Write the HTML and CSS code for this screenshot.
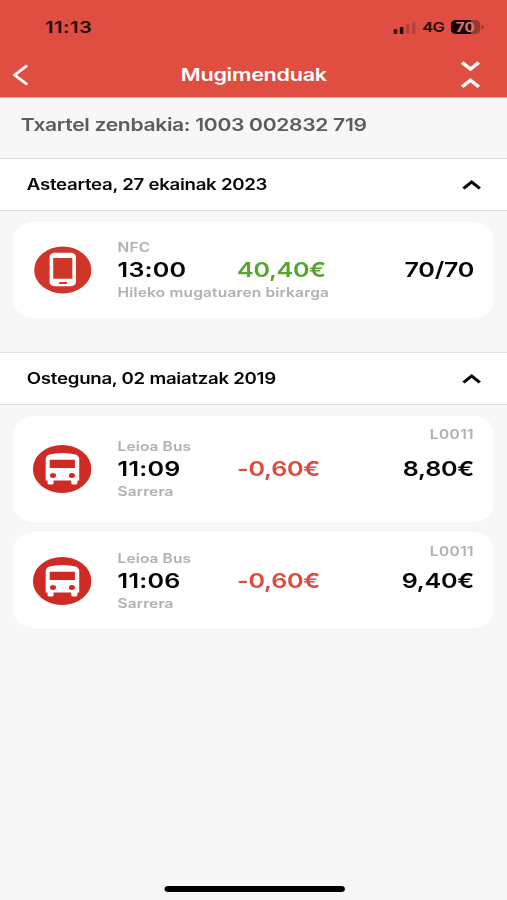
FILE: index.html
```html
<!DOCTYPE html>
<html lang="eu">
<head>
<meta charset="utf-8">
<title>Mugimenduak</title>
<link rel="stylesheet" href="styles.css">
</head>
<body>
<svg class="defs" width="0" height="0">
  <symbol id="up" viewBox="0 0 16 10"><path d="M1.300 8.500 8 2l6.700 6.500" fill="none" stroke="currentColor" stroke-width="2.700"/></symbol>
  <symbol id="bus" viewBox="0 0 48 48">
    <circle cx="24" cy="24" r="24" fill="#d02a27"/>
    <path d="M10.500 14q0-3 3-4.500Q18 8 24.200 8t10.800 1.500q3 1.500 3 4.500v21.500h-1.500v2.500q0 1.500-1.500 1.500h-2q-1.500 0-1.500-1.500v-2.500h-14.500v2.500q0 1.500-1.500 1.500h-2q-1.500 0-1.500-1.500v-2.500h-1.500z" fill="#fff"/>
    <path d="M13.800 14.700h20.700V23H13.800z" fill="#d02a27"/>
    <circle cx="16.500" cy="30.600" r="2.500" fill="#d02a27"/><circle cx="32" cy="30.600" r="2.500" fill="#d02a27"/>
  </symbol>
</svg>
<div class="app">
  <header class="header">
    <div class="status">
      <span class="clock">11:13</span>
      <span class="signal"><i class="bar b1"></i><i class="bar b2"></i><i class="bar b3 off"></i><i class="bar b4 off"></i></span>
      <span class="net">4G</span>
      <span class="battery"><span class="pct">70</span></span><i class="nub"></i>
    </div>
    <div class="nav">
      <svg class="back" width="14" height="22" viewBox="0 0 14 22"><path d="M12.300 1.500 2 11l10.300 9.500" fill="none" stroke="#fff" stroke-width="2.500"/></svg>
      <h1 class="title">Mugimenduak</h1>
      <svg class="collapse" width="16" height="28" viewBox="0 0 16 28"><path d="M1.200 1.500 8 8.100l6.800-6.600M1.200 25.800 8 19.200l6.800 6.600" fill="none" stroke="#fff" stroke-width="3.200"/></svg>
    </div>
  </header>
  <div class="number">Txartel zenbakia: 1003 002832 719</div>

  <section>
    <div class="day"><span class="date">Asteartea, 27 ekainak 2023</span><svg class="chev" width="16" height="10"><use href="#up"/></svg></div>
    <div class="cards">
      <article class="card">
        <svg class="icon phone" viewBox="0 0 48 48"><circle cx="24" cy="24" r="24" fill="#d03529"/><rect x="13" y="6.500" width="22" height="34" rx="4" fill="#fff"/><path d="M16 11.800h16V33H16z" fill="#d03529"/><path d="M21 37.200h6.500" stroke="#d03529" stroke-width="2"/></svg>
        <div class="info"><span class="small-text">NFC</span><span class="hour">13:00</span><span class="small-text desc">Hileko mugatuaren birkarga</span></div>
        <span class="amount plus">40,40€</span>
        <span class="balance">70/70</span>
      </article>
    </div>
  </section>

  <section>
    <div class="day"><span class="date">Osteguna, 02 maiatzak 2019</span><svg class="chev" width="16" height="10"><use href="#up"/></svg></div>
    <div class="cards">
      <article class="card tall">
        <svg class="icon"><use href="#bus"/></svg>
        <div class="info"><span class="small-text">Leioa Bus</span><span class="hour">11:09</span><span class="small-text">Sarrera</span></div>
        <span class="amount minus">-0,60€</span>
        <span class="small-text line">L0011</span>
        <span class="balance">8,80€</span>
      </article>
      <article class="card last">
        <svg class="icon"><use href="#bus"/></svg>
        <div class="info"><span class="small-text">Leioa Bus</span><span class="hour">11:06</span><span class="small-text">Sarrera</span></div>
        <span class="amount minus">-0,60€</span>
        <span class="small-text line">L0011</span>
        <span class="balance">9,40€</span>
      </article>
    </div>
  </section>
  <div class="home"></div>
</div>
</body>
</html>
```
FILE: styles.css
```css
* { box-sizing: border-box; }
html, body { margin: 0; height: 900px; overflow: hidden; background: #f7f7f7; }
.defs { display: block; position: absolute; }
/* The 416px layout is widened to fill the 507px screen. */
.app {
  width: 416px;
  height: 900px;
  display: flex;
  flex-direction: column;
  transform: scaleX(1.21875);
  transform-origin: 0 0;
  font-family: Inter, "Liberation Sans", sans-serif;
  font-weight: 600;
  color: #060606;
  white-space: nowrap;
}
.header { height: 98px; background: #df4e40; border-bottom: 1px solid #eda29b; flex: none; }
.status { display: flex; align-items: center; height: 54px; padding-left: 37px; }
.clock { font-size: 16.500px; letter-spacing: .4px; width: 285.500px; color: #210806; }
.signal { display: flex; align-items: flex-end; gap: 1.900px; height: 13px; width: 24px; }
.bar { width: 3.300px; background: #210806; border-radius: 1px; }
.off { background: #b44439; }
.b1 { height: 5px; }
.b2 { height: 7px; }
.b3 { height: 10px; }
.b4 { height: 12px; }
.net { font-size: 13.500px; letter-spacing: -.7px; width: 23px; color: #210806; }
.battery { width: 24.500px; height: 14px; border-radius: 4px; background: linear-gradient(90deg, #160403 70%, #963a31 70%); display: flex; align-items: center; justify-content: center; }
.pct { font-size: 12.500px; font-weight: 700; color: #e27468; }
.nub { width: 1.500px; height: 4px; margin-left: 1px; background: #9b392f; border-radius: 0 2px 2px 0; }
.nav { display: grid; grid-template-columns: 30px 1fr 30px; align-items: center; height: 41px; padding: 0 12px 0 10px; }
.title { margin: 0; color: #fff; font-size: 17.700px; letter-spacing: -.22px; font-weight: 600; text-align: center; line-height: 24px; padding-left: 2.500px; }
.collapse { justify-self: end; margin-right: 10px; }
.number { height: 60px; flex: none; padding: 16px 0 0 17px; font-size: 17.300px; letter-spacing: -.26px; line-height: 22px; color: #5c5c5c; }
.day { display: flex; align-items: center; justify-content: space-between; height: 53px; border-top: 1px solid #dedede; border-bottom: 1px solid #dedede; background: #fff; padding: 0 21.500px 0 22px; }
.date { font-size: 15.300px; letter-spacing: -.22px; }
.cards { display: flex; flex-direction: column; gap: 10px; padding: 11px 11px 34px; }
.card { height: 96px; border-radius: 17px; background: #fff; display: grid; grid-template-columns: 69.500px 98px 1fr auto; grid-template-rows: 100%; align-items: center; padding: 0 16px; }
.tall { height: 106px; }
.last { padding-top: 2px; }
.icon { width: 48px; height: 48px; }
.phone { width: 47px; margin-left: .5px; }
.info { display: flex; flex-direction: column; width: 0; padding-top: 1px; }
.small-text { font-size: 12.700px; letter-spacing: .1px; line-height: 20px; color: #b0b0b0; }
.desc { letter-spacing: .15px; }
.hour { font-size: 20.600px; letter-spacing: .15px; line-height: 23px; padding-bottom: 2px; }
.amount, .balance { font-size: 20.600px; letter-spacing: -.2px; line-height: 26px; }
.plus { color: #56a432; letter-spacing: -.3px; }
.minus { color: #de4a3c; }
.balance, .line { grid-column: 4; grid-row: 1; text-align: right; }
.line { align-self: start; margin-top: 9px; letter-spacing: .35px; }
.last .line { margin-top: 8px; }
.home { position: fixed; left: 134.500px; top: 885.500px; width: 148px; height: 6px; border-radius: 3px; background: #000; }
```
